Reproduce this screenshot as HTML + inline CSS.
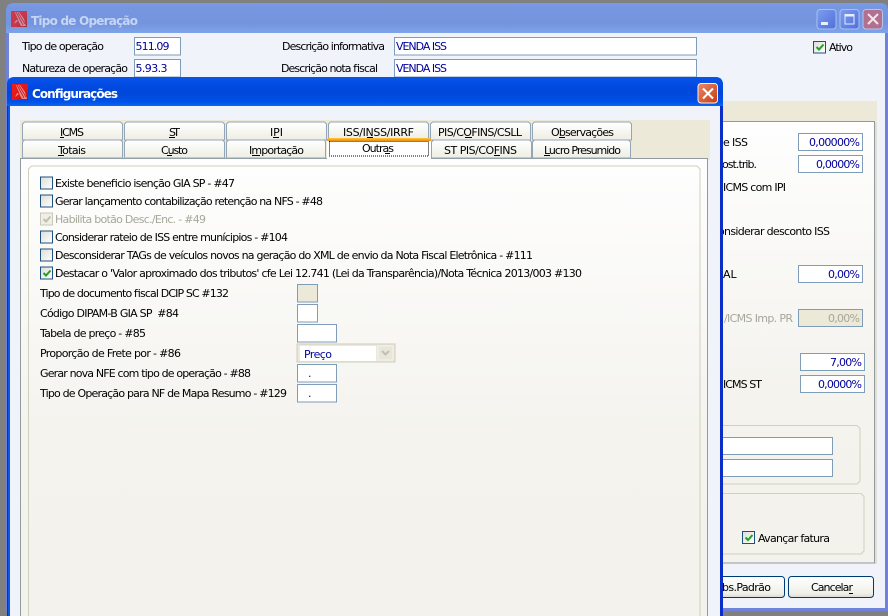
<!DOCTYPE html>
<html><head><meta charset="utf-8"><style>
html,body{margin:0;padding:0;width:888px;height:616px;overflow:hidden;background:#808080}
svg{display:block}
text{font-family:"DejaVu Sans","Liberation Sans",sans-serif;font-size:11px;fill:#000;white-space:pre}
.b{fill:#00009c}.g{fill:#a6a69a}
.f{fill:#fff;stroke:#7f9db9;stroke-width:1}
.d{fill:#ece9d8;stroke:#7f9db9;stroke-width:1}
.tab{fill:url(#tab);stroke:#94a6b5;stroke-width:1}
.cb{fill:url(#cbf);stroke:#1c5180;stroke-width:1}
.ck{fill:none;stroke:#21a121;stroke-width:2}
.u{stroke:#000;stroke-width:1}
.btn{fill:url(#btn);stroke:#003c74;stroke-width:1}
.grp{fill:none;stroke:#d0d0bf;stroke-width:1}
</style></head><body>
<svg width="888" height="616" viewBox="0 0 888 616" xmlns="http://www.w3.org/2000/svg">
<defs>
<linearGradient id="t1" x1="0" y1="0" x2="0" y2="1"><stop offset="0" stop-color="#7a9ae8"/><stop offset=".15" stop-color="#7696e0"/><stop offset=".7" stop-color="#7594de"/><stop offset="1" stop-color="#7fa4e8"/></linearGradient>
<linearGradient id="t2" x1="0" y1="0" x2="0" y2="1"><stop offset="0" stop-color="#0a55e0"/><stop offset=".12" stop-color="#0550e8"/><stop offset=".5" stop-color="#0046da"/><stop offset=".85" stop-color="#0050e8"/><stop offset="1" stop-color="#0a66f0"/></linearGradient>
<linearGradient id="tab" x1="0" y1="0" x2="0" y2="1"><stop offset="0" stop-color="#fff"/><stop offset="1" stop-color="#eeeee4"/></linearGradient>
<linearGradient id="page" x1="0" y1="0" x2="0" y2="1"><stop offset="0" stop-color="#fefefe"/><stop offset=".6" stop-color="#f4f3ee"/><stop offset="1" stop-color="#f3f2ec"/></linearGradient>
<linearGradient id="cbf" x1="0" y1="0" x2="1" y2="1"><stop offset="0" stop-color="#dcdcd7"/><stop offset="1" stop-color="#fff"/></linearGradient>
<linearGradient id="btn" x1="0" y1="0" x2="0" y2="1"><stop offset="0" stop-color="#fff"/><stop offset=".8" stop-color="#f0f0ea"/><stop offset="1" stop-color="#dcd8ce"/></linearGradient>
<linearGradient id="red" x1="0" y1="0" x2="1" y2="1"><stop offset="0" stop-color="#f01c1c"/><stop offset=".6" stop-color="#e01818"/><stop offset="1" stop-color="#a81010"/></linearGradient>
<linearGradient id="cl" x1="0" y1="0" x2="1" y2="1"><stop offset="0" stop-color="#e88a6a"/><stop offset="1" stop-color="#c83a10"/></linearGradient>
<linearGradient id="bb" x1="0" y1="0" x2="1" y2="1"><stop offset="0" stop-color="#7d9df0"/><stop offset="1" stop-color="#4f70d8"/></linearGradient>
<linearGradient id="or" x1="0" y1="0" x2="0" y2="1"><stop offset="0" stop-color="#ffc73c"/><stop offset="1" stop-color="#e68b0c"/></linearGradient>
<g id="ico"><rect width="16" height="16" fill="url(#red)"/><path d="M4 1L8 1 13 8 15 15 10 15 7 10 3 13 6 7Z" fill="#f08888"/><path d="M5 1L12 14M7 1.500L14 13M5 5L9 15M4.500 9L7 8" stroke="#c81818" stroke-width=".8" fill="none"/></g>
</defs>

<!-- back window -->
<rect x="0" y="0" width="888" height="616" fill="#808080"/>
<path d="M6 611V11q0-8 8-8H880q8 0 8 8V611Z" fill="#7083d8"/>
<path d="M6 33V11q0-8 8-8H880q8 0 8 8V33Z" fill="url(#t1)"/>
<rect x="9" y="33" width="876" height="575" fill="#f1f3fa"/>
<use href="#ico" x="11" y="11" opacity=".75"/>
<text x="31" y="25" textLength="107" style="font-weight:bold;font-size:12px;fill:#c5d6f5">Tipo de Operação</text>
<rect x="817" y="9.500" width="19" height="19.500" rx="3" fill="url(#bb)" stroke="#a9c0f2"/><rect x="821" y="22" width="7" height="3" fill="#e8eefc"/>
<rect x="840" y="9.500" width="19" height="19.500" rx="3" fill="url(#bb)" stroke="#a9c0f2"/><rect x="845" y="15" width="9" height="9" fill="none" stroke="#e8eefc"/><rect x="844.500" y="14" width="10" height="2.500" fill="#e8eefc"/>
<rect x="863" y="9.500" width="19.500" height="19.500" rx="3" fill="#b27090" stroke="#b9c4ea"/><path d="M868 14L878 24M878 14L868 24" stroke="#f1e6ee" stroke-width="2"/>

<text x="22" y="50" textLength="82">Tipo de operação</text>
<text x="22" y="72" textLength="106">Natureza de operação</text>
<rect class="f" x="134.500" y="37.500" width="46" height="17.500"/><text class="b" x="135.500" y="50" textLength="34">511.09</text>
<rect class="f" x="134.500" y="59.500" width="46" height="17.500"/><text class="b" x="135.500" y="72" textLength="32">5.93.3</text>
<text x="282" y="50" textLength="103">Descrição informativa</text>
<text x="281" y="72" textLength="97">Descrição nota fiscal</text>
<rect class="f" x="394.500" y="37.500" width="302" height="17.500"/><text class="b" x="396" y="50" textLength="51">VENDA ISS</text>
<rect class="f" x="394.500" y="59.500" width="302" height="17.500"/><text class="b" x="396" y="72" textLength="51">VENDA ISS</text>
<rect class="cb" x="813.500" y="41.500" width="12" height="11.500"/><path class="ck" d="M816.500 47L819 49.500 823.500 44.500"/>
<text x="829" y="51" textLength="24">Ativo</text>

<rect x="723" y="101" width="154" height="20" fill="#ece9d8"/>
<rect x="723" y="121" width="154" height="443" fill="#f3f1e9"/>
<rect x="700.500" y="121.500" width="174" height="441.500" fill="url(#page)" stroke="#919b9c"/>
<rect x="875.500" y="122" width="1" height="442" fill="#d0cfc4"/>
<path d="M700 425.500H857l3 3V481l-3 3H700" class="grp"/>
<path d="M700 493.500H861l3 3V551l-3 3H700" class="grp"/>

<text x="723" y="146" textLength="25">e ISS</text>
<text x="716" y="168" textLength="41">post.trib.</text>
<text x="723" y="191" textLength="63">ICMS com IPI</text>
<text x="711" y="235" textLength="119">Considerar desconto ISS</text>
<text x="723" y="278">AL</text>
<text class="g" x="724" y="322" textLength="69">/ICMS Imp. PR</text>
<text x="723" y="388" textLength="39">ICMS ST</text>
<rect class="f" x="798.500" y="133.500" width="64" height="17"/><text class="b" x="809" y="146" textLength="51">0,00000%</text>
<rect class="f" x="798.500" y="155.500" width="64" height="17"/><text class="b" x="816" y="168" textLength="44">0,0000%</text>
<rect class="f" x="798.500" y="265.500" width="64" height="17"/><text class="b" x="828" y="278" textLength="32">0,00%</text>
<rect class="d" x="798.500" y="309.500" width="64" height="17"/><text class="g" x="828" y="322" textLength="32">0,00%</text>
<rect class="f" x="800.500" y="353.500" width="64" height="17"/><text class="b" x="830" y="366" textLength="32">7,00%</text>
<rect class="f" x="800.500" y="375.500" width="64" height="17"/><text class="b" x="818" y="388" textLength="44">0,0000%</text>
<rect class="f" x="700.500" y="437.500" width="132" height="17"/>
<rect class="f" x="700.500" y="459.500" width="132" height="17"/>
<rect class="cb" x="742.500" y="531.500" width="12" height="12"/><path class="ck" d="M745.500 537.500L748 540 752.500 535"/>
<text x="758" y="542" textLength="72">Avançar fatura</text>
<rect x="686.500" y="576.500" width="98" height="21" rx="3" class="btn"/><text x="714" y="591" textLength="57">Obs.Padrão</text>
<rect x="788.500" y="576.500" width="85" height="21" rx="3" class="btn"/><text x="811" y="591" textLength="42">Cancelar</text><line class="u" x1="849" x2="853" y1="593.500" y2="593.500"/>

<!-- dialog -->
<path d="M7 616V85q0-8 8-8H715q8 0 8 8V616Z" fill="#0a2fc8"/>
<rect x="8" y="100" width="2" height="516" fill="#0a56e8"/>
<path d="M7 106V85q0-8 8-8H715q8 0 8 8V106Z" fill="url(#t2)"/>
<rect x="10" y="106" width="710" height="510" fill="#f1f3fa"/>
<use href="#ico" x="12" y="84"/>
<text x="32" y="98" textLength="86" style="font-weight:bold;font-size:12px;fill:#fff">Configurações</text>
<rect x="698" y="83.500" width="19.500" height="19.500" rx="3" fill="url(#cl)" stroke="#f2f2f2"/><path d="M703 88.500L713 98.500M713 88.500L703 98.500" stroke="#fff" stroke-width="2"/>

<!-- tabs -->
<rect x="20" y="120" width="690" height="40" fill="#ece9d8"/>
<rect x="20.500" y="158.500" width="687" height="460" fill="url(#page)" stroke="#919b9c"/>
<path d="M28.500 620V169l3-3H697l3 3V620" class="grp"/>

<path class="tab" d="M22.500 140V124l2-2h96l2 2V140Z"/>
<path class="tab" d="M124.500 140V124l2-2h96l2 2V140Z"/>
<path class="tab" d="M226.500 140V124l2-2h96l2 2V140Z"/>
<path class="tab" d="M328.500 140V124l2-2h96l2 2V140Z"/>
<path class="tab" d="M430.500 140V124l2-2h96l2 2V140Z"/>
<path class="tab" d="M532.500 140V124l2-2h95l2 2V140Z"/>
<path class="tab" d="M22.500 158V142l2-2h96l2 2V158Z"/>
<path class="tab" d="M124.500 158V142l2-2h96l2 2V158Z"/>
<path class="tab" d="M226.500 158V142l2-2h96l1 2V158Z"/>
<path class="tab" d="M431.500 158V142l2-2h96l2 2V158Z"/>
<path class="tab" d="M532.500 158V142l2-2h94l2 2V158Z"/>
<rect x="327" y="140" width="104" height="20" fill="#fff"/>
<path d="M327 141V139.500l1-1.500H430l1 1.500V141Z" fill="url(#or)"/>
<rect x="329.500" y="141.500" width="99" height="14.500" fill="none" stroke="#000" stroke-dasharray="1 1"/>

<text x="60" y="136" textLength="24">ICMS</text><line class="u" x1="60" x2="64" y1="137.500" y2="137.500"/>
<text x="169" y="136" textLength="11">ST</text><line class="u" x1="169" x2="175" y1="137.500" y2="137.500"/>
<text x="270" y="136" textLength="13">IPI</text><line class="u" x1="273" x2="279" y1="137.500" y2="137.500"/>
<text x="343" y="136" textLength="71">ISS/INSS/IRRF</text><line class="u" x1="367" x2="373" y1="137.500" y2="137.500"/>
<text x="438" y="136" textLength="84">PIS/COFINS/CSLL</text><line class="u" x1="465" x2="472" y1="137.500" y2="137.500"/>
<text x="551" y="136" textLength="63">Observações</text><line class="u" x1="559" x2="565" y1="137.500" y2="137.500"/>
<text x="58" y="154" textLength="28">Totais</text><line class="u" x1="58" x2="64" y1="155.500" y2="155.500"/>
<text x="161" y="154" textLength="27">Custo</text><line class="u" x1="167" x2="172" y1="155.500" y2="155.500"/>
<text x="249" y="154" textLength="55">Importação</text><line class="u" x1="252" x2="260" y1="155.500" y2="155.500"/>
<text x="362" y="152" textLength="32">Outras</text><line class="u" x1="385" x2="390" y1="153.500" y2="153.500"/>
<text x="444" y="154" textLength="73">ST PIS/COFINS</text><line class="u" x1="494" x2="500" y1="155.500" y2="155.500"/>
<text x="544" y="154" textLength="77">Lucro Presumido</text><line class="u" x1="544" x2="550" y1="155.500" y2="155.500"/>

<!-- check rows -->
<rect class="cb" x="40.500" y="177" width="12" height="12"/>
<rect class="cb" x="40.500" y="195" width="12" height="12"/>
<rect x="40.500" y="213" width="12" height="12" fill="#f0efe6" stroke="#c9c7ba"/><path d="M43.500 219L46 221.500 50.500 216.500" fill="none" stroke="#c0bfb2" stroke-width="2"/>
<rect class="cb" x="40.500" y="231" width="12" height="12"/>
<rect class="cb" x="40.500" y="249" width="12" height="12"/>
<rect class="cb" x="40.500" y="267" width="12" height="12"/><path class="ck" d="M43.500 273L46 275.500 50.500 270.500"/>
<text x="55" y="187" textLength="180">Existe beneficio isenção GIA SP - #47</text>
<text x="55" y="205" textLength="268">Gerar lançamento contabilização retenção na NFS - #48</text>
<text class="g" x="55" y="223" textLength="151">Habilita botão Desc./Enc. - #49</text>
<text x="55" y="241" textLength="233">Considerar rateio de ISS entre munícipios - #104</text>
<text x="55" y="259" textLength="478">Desconsiderar TAGs de veículos novos na geração do XML de envio da Nota Fiscal Eletrônica - #111</text>
<text x="55" y="277" textLength="527">Destacar o 'Valor aproximado dos tributos' cfe Lei 12.741 (Lei da Transparência)/Nota Técnica 2013/003 #130</text>

<text x="40" y="297" textLength="189">Tipo de documento fiscal DCIP SC #132</text>
<text x="40" y="317" textLength="139">Código DIPAM-B GIA SP  #84</text>
<text x="40" y="337" textLength="106">Tabela de preço - #85</text>
<text x="40" y="357" textLength="141">Proporção de Frete por - #86</text>
<text x="40" y="377" textLength="211">Gerar nova NFE com tipo de operação - #88</text>
<text x="40" y="397" textLength="247">Tipo de Operação para NF de Mapa Resumo - #129</text>

<rect class="d" x="297.500" y="284.500" width="20" height="17.500"/>
<rect class="f" x="297.500" y="304.500" width="20" height="17.500"/>
<rect class="f" x="297.500" y="324.500" width="39" height="17.500"/>
<rect x="297" y="344" width="98" height="18" fill="#ece9d8" stroke="#cfcdbc"/>
<rect x="300" y="346" width="76" height="15" fill="#fff"/>
<rect x="378" y="346" width="15" height="14" fill="#e8e6da" stroke="#f5f4ee"/>
<path d="M382 351l3.500 3.500L389 351" fill="none" stroke="#c0bfb2" stroke-width="2"/>
<text class="b" x="304" y="358" textLength="28">Preço</text>
<rect class="f" x="297.500" y="364.500" width="39" height="17.500"/><text class="b" x="308" y="377">.</text>
<rect class="f" x="297.500" y="384.500" width="39" height="17.500"/><text class="b" x="308" y="397">.</text>
</svg>
</body></html>
